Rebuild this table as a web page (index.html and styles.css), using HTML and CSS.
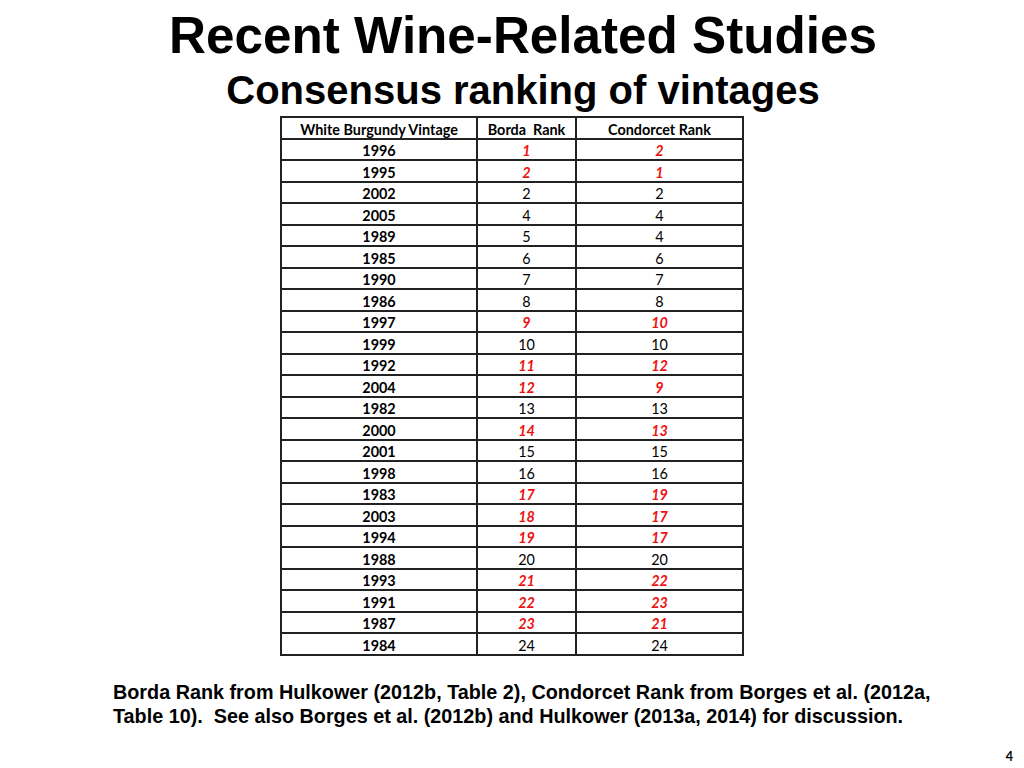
FILE: index.html
```html
<!DOCTYPE html>
<html>
<head>
<meta charset="utf-8">
<link rel="stylesheet" href="styles.css">
</head>
<body>
<div class="slide">
  <h1 class="title">Recent Wine-Related Studies</h1>
  <h2 class="subtitle">Consensus ranking of vintages</h2>
  <table class="ranks">
    <thead>
      <tr><th class="c1">White Burgundy Vintage</th><th class="c2">Borda&nbsp; Rank</th><th class="c3">Condorcet Rank</th></tr>
    </thead>
    <tbody>
      <tr><th>1996</th><td class="hl">1</td><td class="hl">2</td></tr>
      <tr><th>1995</th><td class="hl">2</td><td class="hl">1</td></tr>
      <tr><th>2002</th><td>2</td><td>2</td></tr>
      <tr><th>2005</th><td>4</td><td>4</td></tr>
      <tr><th>1989</th><td>5</td><td>4</td></tr>
      <tr><th>1985</th><td>6</td><td>6</td></tr>
      <tr><th>1990</th><td>7</td><td>7</td></tr>
      <tr><th>1986</th><td>8</td><td>8</td></tr>
      <tr><th>1997</th><td class="hl">9</td><td class="hl">10</td></tr>
      <tr><th>1999</th><td>10</td><td>10</td></tr>
      <tr><th>1992</th><td class="hl">11</td><td class="hl">12</td></tr>
      <tr><th>2004</th><td class="hl">12</td><td class="hl">9</td></tr>
      <tr><th>1982</th><td>13</td><td>13</td></tr>
      <tr><th>2000</th><td class="hl">14</td><td class="hl">13</td></tr>
      <tr><th>2001</th><td>15</td><td>15</td></tr>
      <tr><th>1998</th><td>16</td><td>16</td></tr>
      <tr><th>1983</th><td class="hl">17</td><td class="hl">19</td></tr>
      <tr><th>2003</th><td class="hl">18</td><td class="hl">17</td></tr>
      <tr><th>1994</th><td class="hl">19</td><td class="hl">17</td></tr>
      <tr><th>1988</th><td>20</td><td>20</td></tr>
      <tr><th>1993</th><td class="hl">21</td><td class="hl">22</td></tr>
      <tr><th>1991</th><td class="hl">22</td><td class="hl">23</td></tr>
      <tr><th>1987</th><td class="hl">23</td><td class="hl">21</td></tr>
      <tr><th>1984</th><td>24</td><td>24</td></tr>
    </tbody>
  </table>
  <p class="note">Borda Rank from Hulkower (2012b, Table 2), Condorcet Rank from Borges et al. (2012a, Table 10).&nbsp; See also Borges et al. (2012b) and Hulkower (2013a, 2014) for discussion.</p>
  <div class="pagenum">4</div>
</div>
</body>
</html>
```
FILE: styles.css
```css
html, body {
  margin: 0;
  padding: 0;
  background: #ffffff;
}
.slide {
  width: 1024px;
  height: 768px;
  position: relative;
  display: flex;
  flex-direction: column;
  align-items: center;
  font-family: "Liberation Sans", Arial, sans-serif;
  color: #000;
  overflow: hidden;
}
.title {
  margin: 7px 0 0 22px;
  font-size: 51.2px;
  font-weight: bold;
  line-height: 58px;
}
.subtitle {
  margin: 0 0 0 22px;
  font-size: 40px;
  font-weight: bold;
  line-height: 50px;
}
.ranks {
  margin-top: 1px;
  border-collapse: collapse;
  font-family: Lato, "Open Sans", sans-serif;
  font-size: 14.4px;
  table-layout: fixed;
}
.ranks th, .ranks td {
  border: 2px solid #222;
  height: 16.5px;
  padding: 3px 0 0;
  text-align: center;
  line-height: 15px;
}
.ranks thead th { font-weight: bold; }
.ranks tbody th { font-weight: bold; }
.ranks td { font-weight: normal; }
.ranks td.hl {
  color: #ee1111;
  font-weight: bold;
  font-style: italic;
}
.c1 { width: 194px; }
.c2 { width: 97px; }
.c3 { width: 165px; }
.note {
  align-self: flex-start;
  margin: 24px 0 0 113px;
  width: 840px;
  font-size: 19.8px;
  font-weight: bold;
  line-height: 24px;
}
.pagenum {
  position: absolute;
  right: 11px;
  bottom: 4px;
  font-size: 12.5px;
  font-weight: bold;
  font-family: Lato, sans-serif;
}
```
